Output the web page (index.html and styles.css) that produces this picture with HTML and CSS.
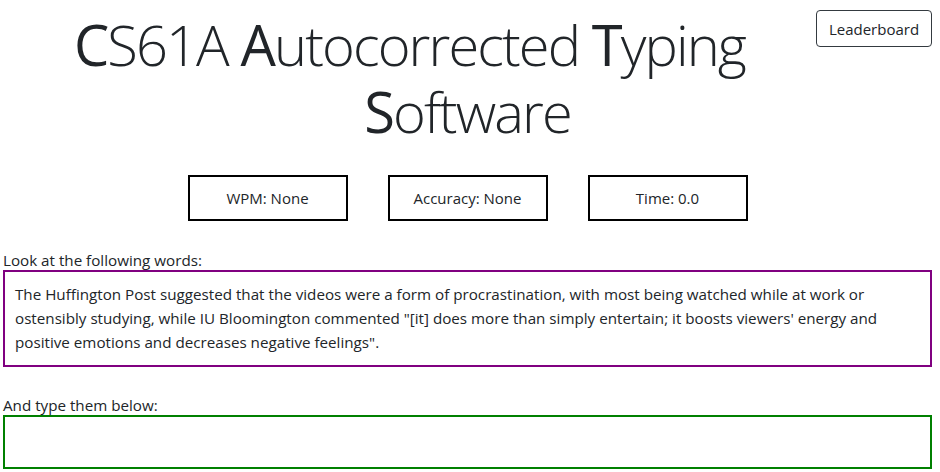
FILE: index.html
```html
<!DOCTYPE html>
<html>
<head>
<meta charset="utf-8">
<link rel="stylesheet" href="styles.css">
</head>
<body>
<div class="page">
  <button class="leaderboard">Leaderboard</button>
  <h1 class="title"><span class="cap">C</span>S61A <span class="cap">A</span>utocorrected <span class="cap">T</span>yping <span class="cap">S</span>oftware</h1>
  <div class="stats">
    <div class="stat">WPM: None</div>
    <div class="stat">Accuracy: None</div>
    <div class="stat">Time: 0.0</div>
  </div>
  <div class="label">Look at the following words:</div>
  <div class="prompt">The Huffington Post suggested that the videos were a form of procrastination, with most being watched while at work or ostensibly studying, while IU Bloomington commented "[it] does more than simply entertain; it boosts viewers' energy and positive emotions and decreases negative feelings".</div>
  <div class="label label-type">And type them below:</div>
  <div class="typed"></div>
</div>
</body>
</html>
```

FILE: styles.css
```css
html, body {
  margin: 0;
  padding: 0;
  background: #fff;
}
body {
  font-family: "Open Sans", "Noto Sans", sans-serif;
  color: #212529;
}
.page {
  padding: 0 8px 0 3px;
}
.leaderboard {
  float: right;
  margin-top: 10px;
  width: 116px;
  height: 37px;
  border: 1px solid #343a40;
  border-radius: 4px;
  background: #fff;
  color: #212529;
  font-family: inherit;
  font-size: 15px;
  padding: 0;
}
.title {
  margin: 0;
  padding-top: 11px;
  text-align: center;
  font-weight: 300;
  font-size: 56px;
  letter-spacing: -1.9px;
  line-height: 67px;
  color: #212529;
}
.cap {
  font-weight: 400;
}
.stats {
  display: flex;
  justify-content: center;
  gap: 40px;
  margin-top: 30px;
}
.stat {
  width: 156px;
  height: 42px;
  border: 2px solid #000;
  display: flex;
  align-items: center;
  justify-content: center;
  font-size: 15px;
}
.label {
  font-size: 15.2px;
  line-height: 20px;
  margin-top: 29px;
}
.prompt {
  border: 2px solid #800080;
  padding: 10px 10px 11px;
  font-size: 15.2px;
  line-height: 24px;
}
.label-type {
  margin-top: 28px;
}
.typed {
  border: 2px solid #008000;
  height: 50px;
}
```
